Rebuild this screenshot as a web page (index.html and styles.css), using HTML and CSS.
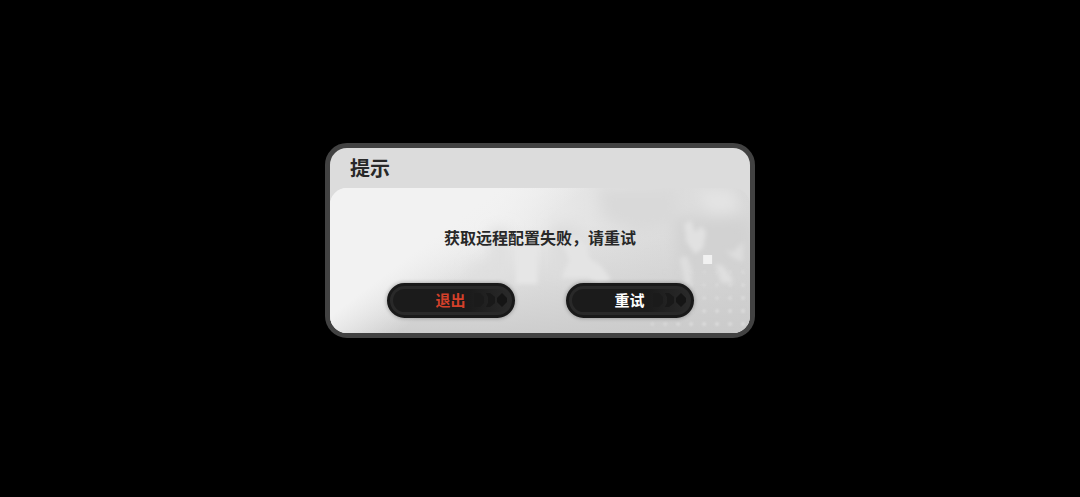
FILE: index.html
```html
<!DOCTYPE html>
<html lang="zh-CN">
<head>
<meta charset="utf-8">
<meta name="viewport" content="width=device-width, initial-scale=1">
<title>提示</title>
<link rel="stylesheet" href="styles.css">
</head>
<body>
<main class="screen">
  <section class="dialog" role="alertdialog" aria-labelledby="dialog-title" aria-describedby="dialog-message">
    <h1 class="dialog-title" id="dialog-title">提示</h1>
    <div class="dialog-body">
      <svg class="backdrop" viewBox="0 0 421 145" preserveAspectRatio="none" aria-hidden="true">
        <defs>
          <linearGradient id="base" x1="0" y1="0" x2="1" y2="0">
            <stop offset="0" stop-color="#f2f2f2"/>
            <stop offset=".38" stop-color="#f0f0f0"/>
            <stop offset=".65" stop-color="#e2e2e2"/>
            <stop offset="1" stop-color="#d8d8d8"/>
          </linearGradient>
          <linearGradient id="floor" x1="0" y1="0" x2="0" y2="1">
            <stop offset=".25" stop-color="#c8c8c8" stop-opacity="0"/>
            <stop offset="1" stop-color="#c8c8c8" stop-opacity=".85"/>
          </linearGradient>
          <linearGradient id="glow" x1="0" y1="0" x2="95" y2="125" gradientUnits="userSpaceOnUse">
            <stop offset=".65" stop-color="#f2f2f2"/>
            <stop offset="1.0" stop-color="#f2f2f2" stop-opacity="0"/>
          </linearGradient>
          <pattern id="dots" width="13" height="13" patternUnits="userSpaceOnUse">
            <circle cx="11" cy="6" r="2" fill="#dcdcdc"/>
          </pattern>
          <linearGradient id="fade" x1="0" y1="0" x2="1" y2="1">
            <stop offset="0" stop-color="#fff" stop-opacity="0"/>
            <stop offset=".7" stop-color="#fff"/>
          </linearGradient>
          <mask id="dot-mask"><rect x="320" y="80" width="101" height="62" fill="url(#fade)"/></mask>
          <filter id="soft" x="-20%" y="-20%" width="140%" height="140%"><feGaussianBlur stdDeviation="7"/></filter>
          <filter id="fine"><feGaussianBlur stdDeviation="2"/></filter>
          <filter id="dot-soft"><feGaussianBlur stdDeviation="1"/></filter>
        </defs>
        <rect width="421" height="145" fill="url(#base)"/>
        <rect width="421" height="145" fill="url(#floor)"/>
        <rect width="421" height="145" fill="url(#glow)"/>
        <g filter="url(#soft)">
          <path d="M268 0H350L345 36L310 46L275 30Z" fill="#d9d9d9"/>
          <path d="M345 30H421V90H350Z" fill="#d2d2d2"/>
          <path d="M366 2H405L410 24L380 26Z" fill="#e4e4e4"/>
          <path d="M160 40H180V90H140V76H160Z" fill="#dfdfdf"/>
          <path d="M222 36H250V90H222Z" fill="#dddddd"/>
        </g>
        <g filter="url(#fine)">
          <path d="M186 54H208V96H186Z" fill="#e6e6e6"/>
          <path d="M233 56L246 48L256 55L260 70L272 78L282 92L270 96L258 90H232L240 72Z" fill="#e4e4e4"/>
          <path d="M355 36L362 32L366 44L372 38L377 44L374 60L366 66L357 54Z" fill="#e1e1e1"/>
          <path d="M350 70L358 68L363 82L362 100L356 96Z" fill="#dedede"/>
          <path d="M386 76L394 78L402 88L404 96L392 94Z" fill="#dfdfdf"/>
          <path d="M396 62L404 64L414 54V74L404 70Z" fill="#dddddd"/>
        </g>
        <g mask="url(#dot-mask)"><rect x="320" y="80" width="101" height="62" fill="url(#dots)" filter="url(#dot-soft)"/></g>
        <rect x="374" y="67" width="9" height="9" fill="#f1f1f1"/>
      </svg>
      <p class="message" id="dialog-message">获取远程配置失败，请重试</p>
      <div class="actions">
        <button class="action action-exit" type="button">
          <svg class="chevrons" viewBox="0 0 36 16" aria-hidden="true"><path d="M0 1H6L10 5V11L6 15H0Z" fill="#1b1b1b"/><path d="M12 1H16L21 5V11L16 15H12L14 11V5Z" fill="#191919"/><path d="M28 1L33 6V10L28 15L23 10V6Z" fill="#151515"/></svg>
          <span class="label">退出</span>
        </button>
        <button class="action" type="button">
          <svg class="chevrons" viewBox="0 0 36 16" aria-hidden="true"><path d="M0 1H6L10 5V11L6 15H0Z" fill="#1b1b1b"/><path d="M12 1H16L21 5V11L16 15H12L14 11V5Z" fill="#191919"/><path d="M28 1L33 6V10L28 15L23 10V6Z" fill="#151515"/></svg>
          <span class="label">重试</span>
        </button>
      </div>
    </div>
  </section>
</main>
</body>
</html>
```

FILE: styles.css
```css
* { box-sizing: border-box; }

body {
  margin: 0;
  background: #000;
  color: #282828;
  font-family: "Noto Sans CJK SC", sans-serif;
}

.screen {
  min-height: 100vh;
  display: grid;
  place-items: center;
  padding: 16px 16px 33px;
}

.dialog {
  width: 100%;
  max-width: 430px;
  border: 5px solid #424242;
  border-radius: 22px;
  background: #dcdcdc;
  overflow: hidden;
}

.dialog-title {
  margin: 0;
  padding: 0 20px;
  font-size: 20px;
  line-height: 40px;
  font-weight: 700;
}

.dialog-body {
  position: relative;
  display: flex;
  flex-direction: column;
  align-items: center;
  gap: 34px;
  padding: 37px 20px 15px;
  border-radius: 17px 17px 0 0;
  overflow: hidden;
}

.backdrop {
  position: absolute;
  inset: 0;
  width: 100%;
  height: 100%;
}

.message {
  position: relative;
  margin: 0;
  font-size: 16px;
  line-height: 24px;
  font-weight: 700;
}

.actions {
  position: relative;
  display: flex;
  flex-wrap: wrap;
  justify-content: center;
  gap: 16px 51px;
}

.action {
  position: relative;
  width: 128px;
  height: 35px;
  padding: 0;
  border: 3px solid #191919;
  border-radius: 18px;
  background: #292929;
  box-shadow: 0 0 4px rgb(0 0 0 / 35%);
  color: #fff;
  font: 700 15px/20px "Noto Sans CJK SC", sans-serif;
  cursor: pointer;
}

.action::before {
  content: "";
  position: absolute;
  inset: 3px;
  border-radius: 12px;
  background: linear-gradient(90deg, #1b1b1b 65%, #232323 85%, #292929);
}

.action-exit { color: #d2402a; }

.chevrons {
  position: absolute;
  right: 2px;
  top: 6px;
  width: 36px;
  height: 16px;
}

.label { position: relative; }
```
